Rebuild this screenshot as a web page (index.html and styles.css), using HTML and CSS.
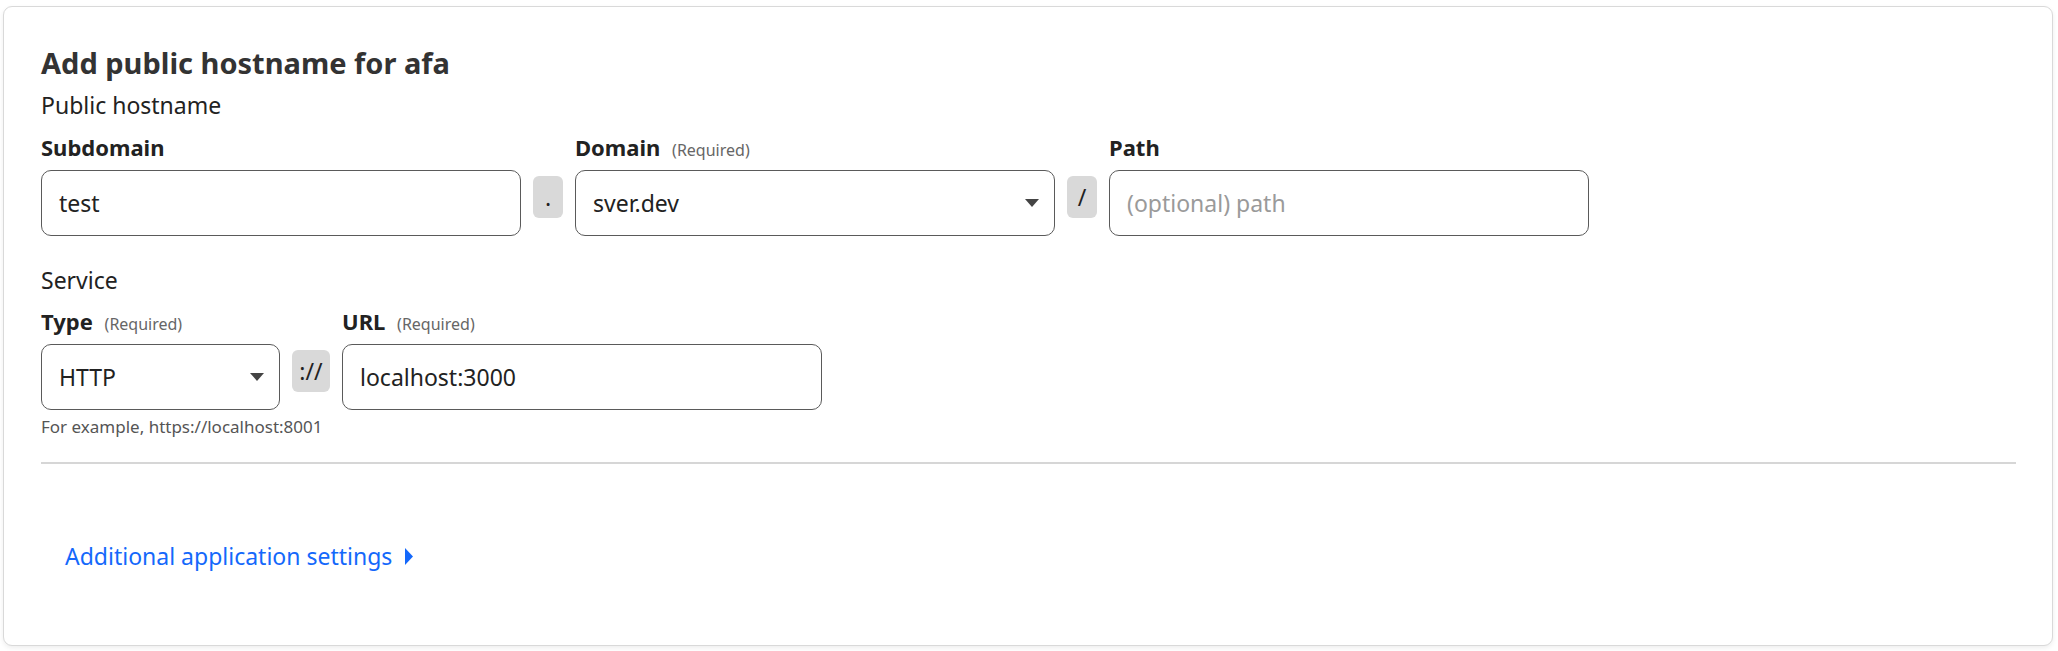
FILE: index.html
```html
<!DOCTYPE html>
<html lang="en">
<head>
<meta charset="utf-8">
<title>Add public hostname</title>
<link rel="stylesheet" href="styles.css">
</head>
<body>
<div class="card">
  <h2 class="title">Add public hostname for afa</h2>

  <div class="section-label">Public hostname</div>
  <div class="grid grid-host">
    <label class="label">Subdomain</label>
    <span></span>
    <label class="label">Domain <span class="req">(Required)</span></label>
    <span></span>
    <label class="label">Path</label>

    <div class="control"><span class="value">test</span></div>
    <div class="sep">.</div>
    <div class="control select"><span class="value">sver.dev</span><span class="caret"></span></div>
    <div class="sep">/</div>
    <div class="control"><span class="placeholder">(optional) path</span></div>
  </div>

  <div class="section-label">Service</div>
  <div class="grid grid-svc">
    <label class="label">Type <span class="req">(Required)</span></label>
    <span></span>
    <label class="label">URL <span class="req">(Required)</span></label>

    <div class="control select"><span class="value">HTTP</span><span class="caret"></span></div>
    <div class="sep">://</div>
    <div class="control"><span class="value">localhost:3000</span></div>

    <div class="helper">For example, https://localhost:8001</div>
  </div>

  <hr class="divider">

  <div class="more">
    <span class="more-link">Additional application settings
      <svg class="more-icon" width="8" height="17" viewBox="0 0 8 17"><polygon points="0,0 8,8.5 0,17" fill="currentColor"/></svg>
    </span>
  </div>
</div>
</body>
</html>
```

FILE: styles.css
```css
html, body {
  margin: 0;
  padding: 0;
  background: #ffffff;
}

body {
  font-family: "Noto Sans", "Open Sans", "Liberation Sans", sans-serif;
  color: #313131;
  padding: 6px 5px 5px 3px;
}

.card {
  border: 1px solid #d9d9d9;
  border-radius: 9px;
  background: #fff;
  box-shadow: 0 2px 5px rgba(0, 0, 0, 0.07);
  padding: 37px 36px 0 37px;
  height: 640px;
  box-sizing: border-box;
}

.title {
  margin: 0;
  font-size: 29px;
  font-weight: 700;
  line-height: 38px;
  color: #333;
}

.section-label {
  font-size: 23px;
  line-height: 30px;
  color: #222;
}

.title + .section-label { margin-top: 8px; }

.grid {
  display: grid;
  column-gap: 12px;
  align-items: start;
}

.grid-host {
  grid-template-columns: 480px 30px 480px 30px 480px;
  margin-top: 12px;
  margin-bottom: 29px;
}

.grid-svc {
  grid-template-columns: 239px 38px 480px;
  margin-top: 11px;
}

.label {
  font-size: 22px;
  font-weight: 700;
  line-height: 30px;
  color: #222;
  margin-bottom: 5px;
  white-space: nowrap;
}

.req {
  font-size: 16px;
  font-weight: 400;
  color: #666;
  margin-left: 6px;
}

.control {
  height: 66px;
  box-sizing: border-box;
  border: 1px solid #5a5a5a;
  border-radius: 10px;
  display: flex;
  align-items: center;
  padding: 0 17px;
  font-size: 23px;
}

.value { color: #222; }
.placeholder { color: #9a9a9a; }

.select { justify-content: space-between; padding-right: 15px; }

.caret {
  width: 0;
  height: 0;
  border-left: 7px solid transparent;
  border-right: 7px solid transparent;
  border-top: 8px solid #444;
}

.sep {
  margin-top: 6px;
  height: 42px;
  border-radius: 6px;
  background: #d9d9d9;
  display: flex;
  align-items: center;
  justify-content: center;
  font-size: 23px;
  color: #222;
}

.helper {
  grid-column: 1 / -1;
  font-size: 17px;
  line-height: 22px;
  color: #555;
  margin-top: 6px;
}

.divider {
  border: 0;
  height: 2px;
  background: #d6d6d6;
  margin: 24px 0 0 0;
}

.more {
  padding: 77px 0 0 24px;
}

.more-link {
  color: #1468fb;
  font-size: 23px;
  line-height: 30px;
  display: inline-flex;
  align-items: center;
  gap: 13px;
}

.more-icon { display: block; }
```
